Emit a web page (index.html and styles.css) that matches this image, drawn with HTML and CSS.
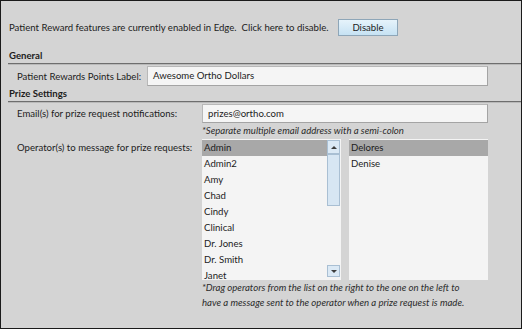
FILE: index.html
```html
<!DOCTYPE html>
<html lang="en">
<head>
    <meta charset="UTF-8">
    <meta name="viewport" content="width=device-width, initial-scale=1.0">
    <title>Patient Rewards</title>
    <link rel="stylesheet" href="styles.css">
</head>
<body>
    <div class="win">
        <div class="notice">
            <span>Patient Reward features are currently enabled in Edge.&nbsp; Click here to disable.</span>
            <button class="btn">Disable</button>
        </div>

        <div class="head">General</div>
        <div class="row row_points">
            <span class="lbl">Patient Rewards Points Label:</span>
            <div class="box box_points">Awesome Ortho Dollars</div>
        </div>

        <div class="head">Prize Settings</div>
        <div class="row row_email">
            <span class="lbl lbl_wide">Email(s) for prize request notifications:</span>
            <div class="box box_email">prizes@ortho.com</div>
        </div>
        <div class="hint">*Separate multiple email address with a semi-colon</div>

        <div class="row row_ops">
            <span class="lbl lbl_wide">Operator(s) to message for prize requests:</span>
            <div class="ops">
                <div class="lists">
                    <div class="list list_left">
                        <ul class="items">
                            <li class="sel">Admin</li>
                            <li>Admin2</li>
                            <li>Amy</li>
                            <li>Chad</li>
                            <li>Cindy</li>
                            <li>Clinical</li>
                            <li>Dr. Jones</li>
                            <li>Dr. Smith</li>
                            <li class="cut">Janet</li>
                        </ul>
                        <div class="sb">
                            <div class="sb_btn"><span class="tri tri_up"></span></div>
                            <div class="sb_thumb"></div>
                            <div class="sb_track"></div>
                            <div class="sb_btn sb_down"><span class="tri tri_down"></span></div>
                        </div>
                    </div>
                    <div class="list list_right">
                        <ul class="items">
                            <li class="sel">Delores</li>
                            <li>Denise</li>
                        </ul>
                    </div>
                </div>
                <div class="note">*Drag operators from the list on the right to the one on the left to<br>have a message sent to the operator when a prize request is made.</div>
            </div>
        </div>
    </div>
</body>
</html>
```

FILE: styles.css
```css
body {
    margin: 0;
    font-family: Lato, "Liberation Sans", sans-serif;
    font-size: 9.6px;
    color: #1c1c1c;
}
.win {
    width: 522px;
    height: 329px;
    box-sizing: border-box;
    border: 1px solid #1a1a1a;
    background: #d4d4d4;
    padding-top: 18px;
    overflow: hidden;
    white-space: nowrap;
}
.notice {
    display: flex;
    align-items: center;
    padding-left: 8px;
    height: 17px;
}
.notice span {
    width: 329px;
}
.btn {
    width: 60px;
    height: 17px;
    padding: 0;
    border: 1px solid #8ea6b8;
    background: linear-gradient(#e6f3fb, #c6e2f3);
    font: inherit;
    color: #1c1c1c;
}
.head {
    font-weight: bold;
    margin-left: 7px;
    padding-left: 1px;
    height: 14px;
    line-height: 13px;
    border-bottom: 1px solid #6e6e6e;
    box-shadow: 0 1px 0 #b9b9b9;
}
.notice + .head {
    margin-top: 13px;
}
.row {
    display: flex;
    align-items: center;
}
.lbl {
    padding-left: 16px;
    width: 130px;
}
.lbl_wide {
    width: 185px;
}
.box {
    box-sizing: border-box;
    height: 20px;
    line-height: 18px;
    width: 341px;
    padding-left: 5px;
    background: #f5f5f5;
    border: 1px solid #b8b8b8;
    border-right-color: #a4a4a4;
    border-bottom-color: #a4a4a4;
}
.row_points {
    margin: 2px 0 1px;
}
.box_email {
    width: 286px;
    height: 19px;
}
.row_email {
    margin-top: 2px;
}
.hint, .note {
    font-style: italic;
    color: #2b2b2b;
}
.hint {
    padding-left: 201px;
    height: 16px;
    line-height: 16px;
}
.row_ops {
    align-items: flex-start;
}
.row_ops .lbl {
    padding-top: 3px;
}
.lists {
    display: flex;
    gap: 8px;
    height: 141px;
}
.list {
    width: 139px;
    background: #f4f4f4;
    display: flex;
    overflow: hidden;
}
.items {
    list-style: none;
    margin: 0;
    padding: 1px 0 0;
    flex: 1;
    overflow: hidden;
}
.items li {
    height: 16px;
    line-height: 16px;
    padding-left: 2px;
}
.items .cut {
    height: 12px;
    overflow: hidden;
}
.items .sel {
    background: #a8a8a8;
}
.sb {
    width: 13px;
    margin: 1px 1px 3px 0;
    display: flex;
    flex-direction: column;
}
.sb_btn {
    height: 14px;
    box-sizing: border-box;
    border: 1px solid #a9bfd3;
    background: #dbe9f5;
    display: flex;
    align-items: center;
    justify-content: center;
}
.sb_down {
    height: 12px;
}
.sb_thumb {
    height: 52px;
    box-sizing: border-box;
    border: 1px solid #a9bfd3;
    background: #d7e6f3;
}
.sb_track {
    flex: 1;
}
.tri {
    width: 0;
    height: 0;
    border-left: 3px solid transparent;
    border-right: 3px solid transparent;
}
.tri_up {
    border-bottom: 3px solid #3c3c3c;
}
.tri_down {
    border-top: 3px solid #3c3c3c;
}
.note {
    line-height: 15px;
}
```
